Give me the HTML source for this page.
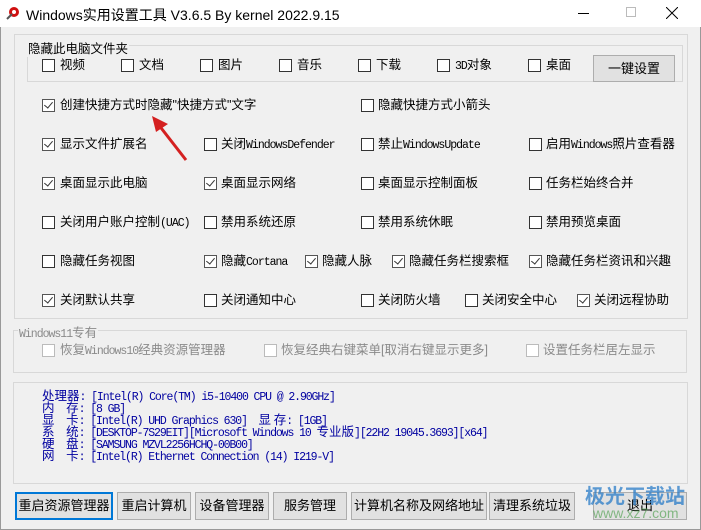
<!DOCTYPE html>
<html><head><meta charset="utf-8"><style>
*{margin:0;padding:0;box-sizing:border-box}
body{width:701px;height:530px;background:#f0f0f0;position:relative;overflow:hidden;font-family:"Liberation Sans","Noto Sans CJK SC",sans-serif;font-size:12.5px;color:#000}
.a{position:absolute;white-space:nowrap}
.tb{left:0;top:0;width:701px;height:27px;background:#fff}
.cb{position:absolute;width:13px;height:13px;border:1px solid #333;background:#fff}
.cb.c{border-color:#555}
.cb.c:after{content:"";position:absolute;left:3px;top:0px;width:4px;height:7px;border:solid #333;border-width:0 1.5px 1.5px 0;transform:rotate(40deg)}
.cb.d{border-color:#bbb}
.l{position:absolute;white-space:nowrap;line-height:14px}
.m{font-family:"Liberation Mono",monospace;font-size:11.5px;letter-spacing:-1px}
.g{color:#8a8a8a}
.box{position:absolute;border:1px solid #d8d8d8}
.btn{position:absolute;top:492px;height:28px;border:1px solid #adadad;background:#e1e1e1;text-align:center;line-height:26px;font-size:13px}
.il{position:absolute;left:42px;height:12px;line-height:12px;color:#0000a0;font-family:"Liberation Mono",monospace;font-size:11.5px;letter-spacing:-1.1px;white-space:pre}
.il b{font-weight:normal;font-family:"Noto Sans CJK SC",sans-serif;font-size:12.5px;letter-spacing:0;line-height:12px}
.rows{position:absolute;left:0;top:2px;width:701px;height:300px}
</style></head><body>
<div class="a tb"></div>
<svg class="a" style="left:5px;top:5px" width="16" height="16"><circle cx="9" cy="7" r="5" fill="#d01010"/><circle cx="9" cy="7" r="2" fill="#fff"/><path d="M2 14 L7 9" stroke="#555" stroke-width="2"/></svg>
<div class="a" style="left:26px;top:5px;font-size:14px">Windows实用设置工具 V3.6.5 By kernel 2022.9.15</div>
<div class="a" style="left:578px;top:13px;width:11px;height:1px;background:#000"></div>
<div class="a" style="left:626px;top:7px;width:10px;height:10px;border:1px solid #bbb"></div>
<svg class="a" style="left:666px;top:7px" width="12" height="12"><path d="M0 0L12 12M12 0L0 12" stroke="#000" stroke-width="1"/></svg>
<div class="a" style="left:0;top:27px;width:1px;height:503px;background:#999"></div>
<div class="a" style="left:700px;top:27px;width:1px;height:503px;background:#999"></div>
<div class="a" style="left:0;top:529px;width:701px;height:1px;background:#999"></div>

<div class="box" style="left:14px;top:34px;width:674px;height:285px"></div>
<div class="box" style="left:27px;top:45px;width:656px;height:37px"></div>
<div class="a" style="left:27px;top:38px;background:#f0f0f0;padding:0 1px">隐藏此电脑文件夹</div>

<div class="cb" style="left:42px;top:59px"></div><div class="l" style="left:60px;top:58px">视频</div>
<div class="cb" style="left:121px;top:59px"></div><div class="l" style="left:139px;top:58px">文档</div>
<div class="cb" style="left:200px;top:59px"></div><div class="l" style="left:218px;top:58px">图片</div>
<div class="cb" style="left:279px;top:59px"></div><div class="l" style="left:297px;top:58px">音乐</div>
<div class="cb" style="left:358px;top:59px"></div><div class="l" style="left:376px;top:58px">下载</div>
<div class="cb" style="left:437px;top:59px"></div><div class="l" style="left:455px;top:58px"><span class="m">3D</span>对象</div>
<div class="cb" style="left:528px;top:59px"></div><div class="l" style="left:546px;top:58px">桌面</div>
<div class="btn" style="left:593px;top:55px;height:27px;width:82px;line-height:25px">一键设置</div>

<div class="rows">
<div class="cb c" style="left:42px;top:97px"></div><div class="l" style="left:60px;top:96px">创建快捷方式时隐藏"快捷方式"文字</div>
<div class="cb" style="left:361px;top:97px"></div><div class="l" style="left:378px;top:96px">隐藏快捷方式小箭头</div>
<svg class="a" style="left:148px;top:112px" width="42" height="48"><path d="M38 46 L10 10" stroke="#d42020" stroke-width="3"/><path d="M4 2 L20 10 L8 18 Z" fill="#d42020"/></svg>

<div class="cb c" style="left:42px;top:136px"></div><div class="l" style="left:60px;top:135px">显示文件扩展名</div>
<div class="cb" style="left:204px;top:136px"></div><div class="l" style="left:221px;top:135px">关闭<span class="m">WindowsDefender</span></div>
<div class="cb" style="left:361px;top:136px"></div><div class="l" style="left:378px;top:135px">禁止<span class="m">WindowsUpdate</span></div>
<div class="cb" style="left:529px;top:136px"></div><div class="l" style="left:546px;top:135px">启用<span class="m">Windows</span>照片查看器</div>

<div class="cb c" style="left:42px;top:175px"></div><div class="l" style="left:60px;top:174px">桌面显示此电脑</div>
<div class="cb c" style="left:204px;top:175px"></div><div class="l" style="left:221px;top:174px">桌面显示网络</div>
<div class="cb" style="left:361px;top:175px"></div><div class="l" style="left:378px;top:174px">桌面显示控制面板</div>
<div class="cb" style="left:529px;top:175px"></div><div class="l" style="left:546px;top:174px">任务栏始终合并</div>

<div class="cb" style="left:42px;top:214px"></div><div class="l" style="left:60px;top:213px">关闭用户账户控制<span class="m">(UAC)</span></div>
<div class="cb" style="left:204px;top:214px"></div><div class="l" style="left:221px;top:213px">禁用系统还原</div>
<div class="cb" style="left:361px;top:214px"></div><div class="l" style="left:378px;top:213px">禁用系统休眠</div>
<div class="cb" style="left:529px;top:214px"></div><div class="l" style="left:546px;top:213px">禁用预览桌面</div>

<div class="cb" style="left:42px;top:253px"></div><div class="l" style="left:60px;top:252px">隐藏任务视图</div>
<div class="cb c" style="left:204px;top:253px"></div><div class="l" style="left:221px;top:252px">隐藏<span class="m">Cortana</span></div>
<div class="cb c" style="left:305px;top:253px"></div><div class="l" style="left:322px;top:252px">隐藏人脉</div>
<div class="cb c" style="left:392px;top:253px"></div><div class="l" style="left:409px;top:252px">隐藏任务栏搜索框</div>
<div class="cb c" style="left:529px;top:253px"></div><div class="l" style="left:546px;top:252px">隐藏任务栏资讯和兴趣</div>

<div class="cb c" style="left:42px;top:292px"></div><div class="l" style="left:60px;top:291px">关闭默认共享</div>
<div class="cb" style="left:204px;top:292px"></div><div class="l" style="left:221px;top:291px">关闭通知中心</div>
<div class="cb" style="left:361px;top:292px"></div><div class="l" style="left:378px;top:291px">关闭防火墙</div>
<div class="cb" style="left:465px;top:292px"></div><div class="l" style="left:482px;top:291px">关闭安全中心</div>
<div class="cb c" style="left:577px;top:292px"></div><div class="l" style="left:594px;top:291px">关闭远程协助</div>
</div>

<div class="box" style="left:13px;top:330px;width:674px;height:43px"></div>
<div class="a g" style="left:18px;top:322px;background:#f0f0f0;padding:0 1px"><span class="m">Windows11</span>专有</div>
<div class="cb d" style="left:42px;top:344px"></div><div class="l g" style="left:60px;top:343px">恢复<span class="m">Windows10</span>经典资源管理器</div>
<div class="cb d" style="left:264px;top:344px"></div><div class="l g" style="left:281px;top:343px">恢复经典右键菜单[取消右键显示更多]</div>
<div class="cb d" style="left:526px;top:344px"></div><div class="l g" style="left:543px;top:343px">设置任务栏居左显示</div>

<div class="box" style="left:13px;top:382px;width:675px;height:102px"></div>
<div class="il" style="top:389px"><b>处理器</b>: [Intel(R) Core(TM) i5-10400 CPU @ 2.90GHz]</div>
<div class="il" style="top:401px"><b>内</b>  <b>存</b>: [8 GB]</div>
<div class="il" style="top:413px"><b>显</b>  <b>卡</b>: [Intel(R) UHD Graphics 630]  <b>显 存</b>: [1GB]</div>
<div class="il" style="top:425px"><b>系</b>  <b>统</b>: [DESKTOP-7S29EIT][Microsoft Windows 10 <b>专业版</b>][22H2 19045.3693][x64]</div>
<div class="il" style="top:437px"><b>硬</b>  <b>盘</b>: [SAMSUNG MZVL2256HCHQ-00B00]</div>
<div class="il" style="top:449px"><b>网</b>  <b>卡</b>: [Intel(R) Ethernet Connection (14) I219-V]</div>

<div class="btn" style="left:15px;width:98px;border:2px solid #0078d7;line-height:24px">重启资源管理器</div>
<div class="btn" style="left:117px;width:74px">重启计算机</div>
<div class="btn" style="left:195px;width:74px">设备管理器</div>
<div class="btn" style="left:273px;width:74px">服务管理</div>
<div class="btn" style="left:351px;width:136px">计算机名称及网络地址</div>
<div class="btn" style="left:489px;width:86px">清理系统垃圾</div>
<div class="btn" style="left:593px;width:94px">退出</div>
<div class="a" style="left:585px;top:480px;color:#2a7cc8;font-size:20px;font-weight:bold;opacity:.75">极光下载站</div>
<div class="a" style="left:593px;top:505px;color:#5aa55a;font-size:14px;opacity:.7">www.xz7.com</div>
</body></html>
